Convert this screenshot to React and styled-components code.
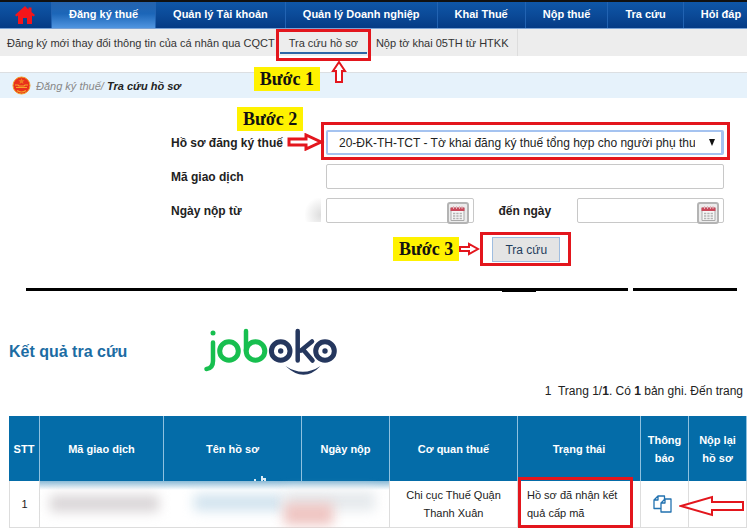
import React from "react";
import styled, { createGlobalStyle, css } from "styled-components";

const GlobalStyle = createGlobalStyle`
  * {
    box-sizing: border-box;
  }
  body {
    margin: 0;
    background: #fff;
    color: #222;
    font: 12px/18px "Liberation Sans", Arial, sans-serif;
    overflow-x: hidden;
  }
  button, input, select {
    font: inherit;
    color: inherit;
  }
`;

const RED = "#e3161d";

const Page = styled.div`
  border-top: 2px solid #111;
  overflow: hidden;
`;

/* main menu */

const MainNav = styled.nav`
  display: flex;
  height: 27px;
  overflow: hidden;
  background: linear-gradient(#0f57a8, #0b4a98 50%, #053b85);
  border-bottom: 1px solid #7ba3d6;
`;

const NavLink = styled.a`
  display: flex;
  flex: none;
  align-items: center;
  padding: 0 17px 2px;
  border-right: 1px solid #2263b2;
  color: #fff;
  font-weight: bold;
  font-size: 11px;
  text-decoration: none;
  white-space: nowrap;
  ${({ $active }) =>
    $active &&
    css`
      background: linear-gradient(#2463ae, #1c66b8 45%, #5095e0);
    `}
`;

const HomeLink = styled(NavLink)`
  width: 52px;
  padding: 0 0 0 15px;
`;

/* second level menu */

const SubNav = styled.nav`
  display: flex;
  height: 27px;
  background: #ededed;
`;

const SubLink = styled.a`
  position: relative;
  flex: none;
  padding: 5px 9px 0;
  color: #333;
  font-size: 11px;
  text-decoration: none;
  white-space: nowrap;
  &:first-child {
    padding: 5px 5px 0 7px;
  }
  &:last-child {
    border-right: 1px solid #ddd;
  }
  ${({ $active }) =>
    $active &&
    css`
      &::before {
        content: "";
        position: absolute;
        left: 0;
        right: 0;
        bottom: 2px;
        height: 2px;
        background: #2c66a5;
      }
      &::after {
        content: "";
        position: absolute;
        inset: 0 -4px -5px;
        border: 3px solid ${RED};
      }
    `}
`;

const Step = styled.span`
  padding: 2px 6px;
  background: #fff200;
  color: #111;
  font: bold 18px/20px "Liberation Serif", "Times New Roman", serif;
  white-space: nowrap;
`;

const StepOne = styled(Step)`
  position: absolute;
  z-index: 1;
  top: 38px;
  left: -26px;
`;

const UpArrow = styled.svg`
  position: absolute;
  z-index: 2;
  top: 31px;
  left: 51px;
`;

const Breadcrumb = styled.div`
  display: flex;
  align-items: center;
  gap: 5px;
  height: 26px;
  margin-top: 16px;
  padding-left: 12px;
  border-top: 1px solid #dcdfe2;
  background: #e6f2fb;
  font-size: 11px;
  font-style: italic;
  span {
    color: #888;
  }
`;

/* search form */

const SearchForm = styled.form`
  display: flex;
  flex-direction: column;
  gap: 9px;
  margin: 32px 23px 0 171px;
`;

const Field = styled.div`
  position: relative;
  display: flex;
  align-items: center;
  height: 25px;
`;

const Label = styled.label`
  flex: none;
  width: ${({ $width }) => $width}px;
  padding-left: ${({ $indent }) => $indent || 0}px;
  font-weight: bold;
`;

const StepTwo = styled(Step)`
  position: absolute;
  top: -23px;
  left: 66px;
`;

const RightArrow = styled.svg`
  position: absolute;
  z-index: 1;
  top: 3px;
  left: 116px;
`;

const SelectBox = styled.div`
  position: relative;
  flex: 1;
  min-width: 0;
  height: 25px;
  &::before {
    content: "";
    position: absolute;
    inset: -8px -6px -5px -5px;
    border: 3px solid ${RED};
    pointer-events: none;
  }
  svg {
    position: absolute;
    top: 9px;
    right: 9px;
    pointer-events: none;
  }
`;

const Select = styled.select`
  appearance: none;
  width: 100%;
  height: 25px;
  padding: 0 26px 0 11px;
  border: 2px solid #a5c3f0;
  border-right-width: 3px;
  border-radius: 2px;
  background: #fff;
  outline: none;
`;

const TextInput = styled.input`
  flex: 1;
  min-width: 0;
  height: 25px;
  padding: 0 8px;
  border: 1px solid #c8c8c8;
  border-radius: 2px;
  background: #fff;
`;

const DateBox = styled.div`
  display: flex;
  flex: 1;
  min-width: 0;
  height: 25px;
  padding: 3px 4px 0 0;
  border: 1px solid #c8c8c8;
  border-radius: 2px;
`;

const DateInput = styled.input`
  flex: 1;
  min-width: 0;
  height: 20px;
  padding: 0 8px;
  border: 0;
  background: none;
`;

const CalendarButton = styled.button`
  display: flex;
  align-items: center;
  justify-content: center;
  width: 22px;
  height: 22px;
  padding: 0;
  border: 2px solid #b4b4b4;
  border-radius: 3px;
  background: #ececec;
`;

const Smudge = styled.i`
  position: absolute;
  top: 0;
  left: 134px;
  width: 16px;
  height: 24px;
  background: radial-gradient(ellipse at 100% 70%, #ddd, #fff 75%);
`;

const Actions = styled.div`
  display: flex;
  align-items: center;
  margin-left: 222px;
`;

const ButtonFrame = styled.div`
  padding: 2px 8px 1px 9px;
  border: 3px solid ${RED};
`;

const SubmitButton = styled.button`
  width: 68px;
  height: 25px;
  padding: 0;
  border: 1px solid #9fbde0;
  background: #e4e4e4;
  color: #1f3d5c;
`;

const Divider = styled.div`
  display: flex;
  gap: 5px;
  height: 3px;
  margin: 22px 10px 0 26px;
  &::after {
    content: "";
    flex: 104;
    background: #000;
  }
`;

const LongRule = styled.div`
  position: relative;
  flex: 602;
  background: #000;
  &::after {
    content: "";
    position: absolute;
    top: 1px;
    left: 79%;
    width: 34px;
    height: 3px;
    background: #000;
  }
`;

/* results */

const ResultHead = styled.div`
  display: flex;
  align-items: center;
  gap: 77px;
  height: 48px;
  margin: 37px 0 0 9px;
`;

const Title = styled.h2`
  margin: 0;
  color: #1c6ca3;
  font-size: 16px;
  line-height: 20px;
`;

const Pager = styled.div`
  margin: 6px 4px 0 0;
  text-align: right;
  white-space: pre;
`;

const Table = styled.table`
  width: calc(100% - 9px);
  margin: 16px 0 0 9px;
  table-layout: fixed;
  border-collapse: separate;
  border-spacing: 0;
  font-size: 11px;
`;

const Th = styled.th`
  height: 65px;
  padding: 0 4px;
  border-right: 1px solid #8fc1df;
  background: #046ca8;
  color: #fff;
`;

const Td = styled.td`
  position: relative;
  height: 47px;
  padding: 0 ${({ $left }) => ($left ? 9 : 8)}px;
  border-right: 1px solid #ddd;
  border-bottom: 1px solid #ddd;
  text-align: ${({ $left }) => ($left ? "left" : "center")};
  &:first-child {
    border-left: 1px solid #ddd;
  }
`;

const IconCell = styled(Td)`
  padding: 0 12px;
  text-align: left;
  svg {
    display: block;
  }
`;

const StatusText = styled.div`
  width: 100px;
`;

const HiddenCell = styled(Td)`
  padding: 0;
  background: linear-gradient(#8bbad6, #fff 9px);
`;

const Blur = styled.i`
  position: absolute;
  top: ${({ $top }) => $top}px;
  left: ${({ $left }) => $left}%;
  width: ${({ $width }) => $width}%;
  height: ${({ $height }) => $height}px;
  background: ${({ $color }) => $color};
  filter: blur(6px);
`;

const Scrap = styled.svg`
  position: absolute;
  top: -5px;
  left: 61%;
`;

const StatusFrame = styled.i`
  position: absolute;
  inset: -4px 7px -1px 0;
  border: 3px solid ${RED};
`;

const LeftArrow = styled.svg`
  position: absolute;
  top: 14px;
  left: -10px;
`;

const menu = [
  "Đăng ký thuế",
  "Quản lý Tài khoản",
  "Quản lý Doanh nghiệp",
  "Khai Thuế",
  "Nộp thuế",
  "Tra cứu",
  "Hỏi đáp",
];

const columns = [
  { name: "STT", width: 31 },
  { name: "Mã giao dịch", width: 124 },
  { name: "Tên hồ sơ", width: 138 },
  { name: "Ngày nộp", width: 88 },
  { name: "Cơ quan thuế", width: 128 },
  { name: "Trạng thái", width: 123 },
  { name: "Thông báo", width: 48 },
  { name: "Nộp lại hồ sơ", width: 58 },
];

const HomeIcon = () => (
  <svg width="20" height="18" viewBox="0 0 20 18" fill="#f5151b">
    <path d="M10 0 0 9l1.500 1.500L3 9.500V18h5v-6h4v6h5V9.500l1.500 1L20 9l-3.500-3V1.500h-3v2z" />
  </svg>
);

const Emblem = () => (
  <svg width="19" height="19" viewBox="0 0 19 19">
    <circle cx="9.500" cy="9.500" r="8.500" fill="#e9301b" stroke="#f2a023" />
    <path d="m9.500 2 .9 2.200 2.300.1-1.800 1.500.6 2.200-2-1.300-2 1.300.6-2.200-1.800-1.500 2.300-.1z" fill="#f07a20" />
    <path d="M3 9h3l1 1h5l1-1h3M4 11.500h11M5 14.500c3 2 6 2 9 0" fill="none" stroke="#f5a52a" strokeWidth="1.200" />
  </svg>
);

const CalendarIcon = () => (
  <svg width="15" height="16" viewBox="0 0 15 16">
    <path d="M1 3h13v12.500H1z" fill="#f6f6f6" stroke="#aaa" />
    <path d="M.5 2.500h14V6H.5z" fill="#c9485a" />
    <path d="M3.500 1v3M6.500 1v3M9.500 1v3M12 1v3" stroke="#e7b5bb" />
    <path d="M3 8.500h9M3 11h9M3 13.500h9" stroke="#b3b3b3" strokeWidth="1.500" strokeDasharray="2.300 1" />
  </svg>
);

const CopyIcon = () => (
  <svg width="19" height="18" viewBox="0 0 19 18" fill="#fff" stroke="#2272b0" strokeWidth="1.300" strokeLinejoin="round">
    <path d="M5 1h6.500v12.500H1V5zM5 1v4H1" />
    <path d="M12 4h6v13H8V8zM12 4v4H8" />
  </svg>
);

const Logo = () => (
  <svg width="134" height="48" viewBox="0 0 134 48" fill="none" strokeWidth="5" strokeLinecap="round" role="img" aria-label="joboko">
    <g stroke="#17bf4f">
      <path d="M9 14.500V33c0 5-2.500 7.500-6.500 8" strokeWidth="4.500" />
      <circle cx="25" cy="23" r="9.300" />
      <path d="M42 3v20" strokeWidth="4.500" />
      <circle cx="51.500" cy="23" r="9.300" />
      <circle cx="9" cy="5" r="2.500" fill="#17bf4f" stroke="none" />
    </g>
    <g stroke="#25375e">
      <circle cx="76.700" cy="23" r="9.300" />
      <path d="M93.700 3v29.500M108 13.500 97 22.500M99 21.500l9.500 11" strokeWidth="4.500" />
      <circle cx="121" cy="23" r="9.300" />
    </g>
    <g fill="#25375e">
      <circle cx="76.700" cy="23" r="2.700" />
      <circle cx="121" cy="23" r="2.700" />
      <path d="M81.500 38q17.500 11.500 35 0-16.500 17.500-35 0z" />
    </g>
  </svg>
);

const DateField = ({ id, label }) => (
  <DateBox>
    <DateInput id={id} type="text" aria-label={label} />
    <CalendarButton type="button" aria-label="Chọn ngày">
      <CalendarIcon />
    </CalendarButton>
  </DateBox>
);

const App = () => {
  return (
    <Page>
      <GlobalStyle />
      <MainNav>
        <HomeLink href="#" aria-label="Trang chủ">
          <HomeIcon />
        </HomeLink>
        {menu.map((item, i) => (
          <NavLink key={item} href="#" $active={i === 0}>
            {item}
          </NavLink>
        ))}
      </MainNav>
      <SubNav>
        <SubLink href="#">Đăng ký mới thay đổi thông tin của cá nhân qua CQCT</SubLink>
        <SubLink href="#" $active>
          Tra cứu hồ sơ
          <StepOne>Bước 1</StepOne>
          <UpArrow width="16" height="24" viewBox="0 0 16 24" fill="#fff" stroke={RED} strokeWidth="2">
            <path d="M8 2 2 11h3v11h6V11h3z" />
          </UpArrow>
        </SubLink>
        <SubLink href="#">Nộp tờ khai 05TH từ HTKK</SubLink>
      </SubNav>
      <Breadcrumb>
        <Emblem />
        <div>
          <span>Đăng ký thuế/</span> <b>Tra cứu hồ sơ</b>
        </div>
      </Breadcrumb>

      <SearchForm onSubmit={(e) => e.preventDefault()}>
        <Field>
          <StepTwo>Bước 2</StepTwo>
          <Label htmlFor="profile" $width={155}>
            Hồ sơ đăng ký thuế
          </Label>
          <RightArrow width="38" height="18" viewBox="0 0 38 18" fill="#fff" stroke={RED} strokeWidth="3">
            <path d="M2 6h17V2l15 7-15 7v-4H2z" />
          </RightArrow>
          <SelectBox>
            <Select id="profile">
              <option>20-ĐK-TH-TCT - Tờ khai đăng ký thuế tổng hợp cho người phụ thu</option>
            </Select>
            <svg width="6" height="7" viewBox="0 0 6 7">
              <path d="M0 0h6L3 7z" fill="#111" />
            </svg>
          </SelectBox>
        </Field>
        <Field>
          <Label htmlFor="code" $width={155}>
            Mã giao dịch
          </Label>
          <TextInput id="code" type="text" />
        </Field>
        <Field>
          <Label htmlFor="from" $width={155}>
            Ngày nộp từ
          </Label>
          <Smudge />
          <DateField id="from" label="Ngày nộp từ" />
          <Label htmlFor="to" $width={103} $indent={25}>
            đến ngày
          </Label>
          <DateField id="to" label="đến ngày" />
        </Field>
        <Actions>
          <Step>Bước 3</Step>
          <svg width="21" height="14" viewBox="0 0 21 14" fill="#fff" stroke={RED} strokeWidth="2">
            <path d="M1 5h9V2l9 5-9 5V9H1z" />
          </svg>
          <ButtonFrame>
            <SubmitButton type="submit">Tra cứu</SubmitButton>
          </ButtonFrame>
        </Actions>
      </SearchForm>
      <Divider>
        <LongRule />
      </Divider>

      <ResultHead>
        <Title>Kết quả tra cứu</Title>
        <Logo />
      </ResultHead>
      <Pager>
        1{"  "}Trang 1/<b>1</b>. Có <b>1</b> bản ghi. Đến trang
      </Pager>
      <Table>
        <colgroup>
          {columns.map((c) => (
            <col key={c.name} style={{ width: c.width }} />
          ))}
        </colgroup>
        <thead>
          <tr>
            {columns.map((c) => (
              <Th key={c.name}>{c.name}</Th>
            ))}
          </tr>
        </thead>
        <tbody>
          <tr>
            <Td>1</Td>
            <HiddenCell colSpan={3}>
              <Blur $top={14} $left={3} $width={31} $height={17} $color="#dad6d8" />
              <Blur $top={13} $left={44} $width={26} $height={17} $color="#d3e4ef" />
              <Blur $top={10} $left={70} $width={26} $height={20} $color="#e6eaed" />
              <Blur $top={22} $left={70} $width={14} $height={22} $color="#efc5c2" />
              <Scrap width="14" height="5" viewBox="0 0 14 5" fill="none" stroke="#dcebf4" strokeWidth="2">
                <path d="M1 4h2M9 0v5M9 3h3v2" />
              </Scrap>
            </HiddenCell>
            <Td>Chi cục Thuế Quận Thanh Xuân</Td>
            <Td $left>
              <StatusText>Hồ sơ đã nhận kết quả cấp mã</StatusText>
              <StatusFrame />
            </Td>
            <IconCell>
              <CopyIcon />
            </IconCell>
            <Td>
              <LeftArrow width="66" height="22" viewBox="0 0 66 22" fill="#fff" stroke={RED} strokeWidth="2">
                <path d="M2 11 33 2v5h31v8H33v5z" />
              </LeftArrow>
            </Td>
          </tr>
        </tbody>
      </Table>
    </Page>
  );
};

export default App;
